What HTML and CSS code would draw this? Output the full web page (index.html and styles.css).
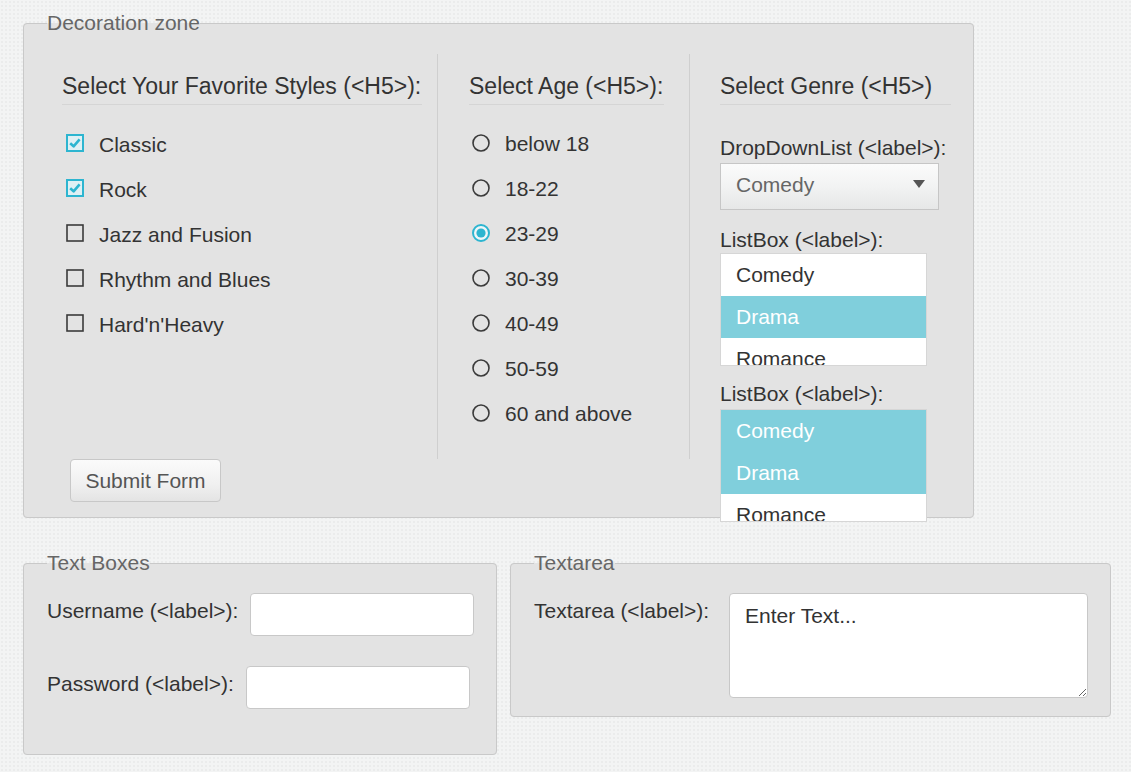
FILE: index.html
```html
<!DOCTYPE html>
<html>
<head>
<meta charset="utf-8">
<link rel="stylesheet" href="styles.css">
</head>
<body>
<div class="page">
  <fieldset class="zone">
    <legend>Decoration zone</legend>
    <div class="cols">
      <div class="col col-styles">
        <h5 class="col-title">Select Your Favorite Styles (&lt;H5&gt;):</h5>
        <ul class="opts">
          <li class="opt"><svg class="mark" width="18" height="18" viewBox="0 0 18 18"><rect x="1" y="1" width="16" height="16" fill="#dff0f4" stroke="#2db5d0" stroke-width="2"/><path d="M4.2 9.2 L7.6 12.3 L13.6 5.4" fill="none" stroke="#2db5d0" stroke-width="2.6" stroke-linejoin="round"/></svg><span>Classic</span></li>
          <li class="opt"><svg class="mark" width="18" height="18" viewBox="0 0 18 18"><rect x="1" y="1" width="16" height="16" fill="#dff0f4" stroke="#2db5d0" stroke-width="2"/><path d="M4.2 9.2 L7.6 12.3 L13.6 5.4" fill="none" stroke="#2db5d0" stroke-width="2.6" stroke-linejoin="round"/></svg><span>Rock</span></li>
          <li class="opt"><svg class="mark" width="18" height="18" viewBox="0 0 18 18"><rect x="1" y="1" width="16" height="16" fill="none" stroke="#3a3a3a" stroke-width="1.6"/></svg><span>Jazz and Fusion</span></li>
          <li class="opt"><svg class="mark" width="18" height="18" viewBox="0 0 18 18"><rect x="1" y="1" width="16" height="16" fill="none" stroke="#3a3a3a" stroke-width="1.6"/></svg><span>Rhythm and Blues</span></li>
          <li class="opt"><svg class="mark" width="18" height="18" viewBox="0 0 18 18"><rect x="1" y="1" width="16" height="16" fill="none" stroke="#3a3a3a" stroke-width="1.6"/></svg><span>Hard'n'Heavy</span></li>
        </ul>
      </div>
      <div class="col col-age">
        <h5 class="col-title">Select Age (&lt;H5&gt;):</h5>
        <ul class="opts">
          <li class="opt"><svg class="mark" width="18" height="18" viewBox="0 0 18 18"><circle cx="9" cy="9" r="8" fill="none" stroke="#3a3a3a" stroke-width="1.6"/></svg><span>below 18</span></li>
          <li class="opt"><svg class="mark" width="18" height="18" viewBox="0 0 18 18"><circle cx="9" cy="9" r="8" fill="none" stroke="#3a3a3a" stroke-width="1.6"/></svg><span>18-22</span></li>
          <li class="opt"><svg class="mark" width="18" height="18" viewBox="0 0 18 18"><circle cx="9" cy="9" r="8" fill="#eef6f8" stroke="#2db5d0" stroke-width="2"/><circle cx="9" cy="9" r="4.6" fill="#2db5d0"/></svg><span>23-29</span></li>
          <li class="opt"><svg class="mark" width="18" height="18" viewBox="0 0 18 18"><circle cx="9" cy="9" r="8" fill="none" stroke="#3a3a3a" stroke-width="1.6"/></svg><span>30-39</span></li>
          <li class="opt"><svg class="mark" width="18" height="18" viewBox="0 0 18 18"><circle cx="9" cy="9" r="8" fill="none" stroke="#3a3a3a" stroke-width="1.6"/></svg><span>40-49</span></li>
          <li class="opt"><svg class="mark" width="18" height="18" viewBox="0 0 18 18"><circle cx="9" cy="9" r="8" fill="none" stroke="#3a3a3a" stroke-width="1.6"/></svg><span>50-59</span></li>
          <li class="opt"><svg class="mark" width="18" height="18" viewBox="0 0 18 18"><circle cx="9" cy="9" r="8" fill="none" stroke="#3a3a3a" stroke-width="1.6"/></svg><span>60 and above</span></li>
        </ul>
      </div>
      <div class="col col-genre">
        <h5 class="col-title">Select Genre (&lt;H5&gt;)</h5>
        <label class="field-label first">DropDownList (&lt;label&gt;):</label>
        <div class="dropdown"><span>Comedy</span><svg class="caret" width="12" height="8" viewBox="0 0 12 8"><path d="M0 0 H12 L6 8 Z" fill="#555"/></svg></div>
        <label class="field-label">ListBox (&lt;label&gt;):</label>
        <ul class="listbox">
          <li>Comedy</li>
          <li class="sel">Drama</li>
          <li>Romance</li>
        </ul>
        <label class="field-label second">ListBox (&lt;label&gt;):</label>
        <ul class="listbox">
          <li class="sel">Comedy</li>
          <li class="sel">Drama</li>
          <li>Romance</li>
        </ul>
      </div>
    </div>
    <button class="submit" type="button">Submit Form</button>
  </fieldset>

  <div class="bottom">
    <fieldset class="box textboxes">
      <legend>Text Boxes</legend>
      <div class="row"><label class="row-label">Username (&lt;label&gt;):</label><input class="text-input" type="text"></div>
      <div class="row"><label class="row-label">Password (&lt;label&gt;):</label><input class="text-input" type="password"></div>
    </fieldset>
    <fieldset class="box textareabox">
      <legend>Textarea</legend>
      <div class="row"><label class="row-label ta-label">Textarea (&lt;label&gt;):</label><textarea class="ta">Enter Text...</textarea></div>
    </fieldset>
  </div>
</div>
</body>
</html>
```
FILE: styles.css
```css
* { box-sizing: border-box; }
html, body {
  margin: 0;
  padding: 0;
}
body {
  background-color: #f3f4f4;
  background-image: radial-gradient(#ebecec 0.8px, transparent 1px);
  background-size: 4px 4px;
  font-family: "Liberation Sans", Arial, sans-serif;
  color: #333;
  font-size: 21px;
  width: 1131px;
  height: 772px;
  overflow: hidden;
}
.page {
  padding: 11px 0 0 23px;
}
fieldset {
  margin: 0;
  padding: 0;
  border: 1px solid #c9c9c9;
  border-radius: 4px;
  background: #e3e3e3;
  min-width: 0;
}
legend {
  margin-left: 23px;
  padding: 0;
  font-size: 21px;
  line-height: 24px;
  color: #666;
}
.box legend { margin-left: 0; }
.zone {
  width: 951px;
  padding: 19px 0 15px 0;
}
.cols {
  display: flex;
  height: 405px;
}
.col {
  padding-top: 19px;
}
.col-styles {
  width: 414px;
  padding-left: 38px;
  padding-right: 15px;
  border-right: 1px solid #cfcfcf;
}
.col-age {
  width: 252px;
  padding-left: 31px;
  padding-right: 25px;
  border-right: 1px solid #cfcfcf;
}
.col-genre {
  width: 283px;
  padding-left: 30px;
  padding-right: 22px;
}
.col-title {
  margin: 0;
  font-size: 23px;
  font-weight: normal;
  line-height: 26px;
  padding-bottom: 5px;
  border-bottom: 1px solid #d5d5d5;
  color: #333;
  white-space: nowrap;
}
.opts {
  list-style: none;
  margin: 17px 0 0 0;
  padding: 0 0 0 4px;
}
.opt {
  display: flex;
  align-items: center;
  height: 45px;
  gap: 15px;
  line-height: 24px;
}
.mark { flex: none; margin-top: -3px; }
.col-age .opts { margin-top: 16px; padding-left: 3px; }
.col-age .mark { margin-top: -2px; }

.field-label {
  display: block;
  line-height: 24px;
  white-space: nowrap;
}
.field-label.first { margin-top: 31px; margin-bottom: 3px; }
.field-label { margin-top: 18px; margin-bottom: 1px; }
.field-label.second { margin-top: 16px; margin-bottom: 3px; }
.dropdown {
  width: 219px;
  height: 47px;
  border: 1px solid #c6c6c6;
  background: linear-gradient(#fbfbfb, #f2f3f3 50%, #e6e7e7);
  display: flex;
  align-items: center;
  justify-content: space-between;
  padding: 0 13px 3px 15px;
  color: #666;
}
.caret { margin-top: -2px; }
.listbox {
  list-style: none;
  margin: 0;
  padding: 0;
  width: 207px;
  height: 113px;
  overflow: hidden;
  background: #fff;
  border: 1px solid #d6d6d6;
  position: relative;
  z-index: 1;
}
.listbox li {
  height: 42px;
  line-height: 42px;
  padding-left: 15px;
  color: #333;
}
.listbox li.sel {
  background: #80cfdc;
  color: #fff;
}
.submit {
  display: block;
  margin: 0 0 0 46px;
  width: 151px;
  height: 43px;
  border: 1px solid #c8c8c8;
  border-radius: 4px;
  background: linear-gradient(#fbfbfb, #f0f0f0 60%, #e4e4e4);
  font-family: "Liberation Sans", Arial, sans-serif;
  font-size: 21px;
  color: #555;
  padding: 0;
}

.bottom {
  display: flex;
  align-items: flex-start;
  gap: 13px;
  margin-top: 33px;
}
.textboxes {
  width: 474px;
  padding: 18px 23px 45px 23px;
}
.textareabox {
  width: 601px;
  padding: 18px 22px 18px 23px;
}
.row {
  display: flex;
  align-items: flex-start;
}
.row + .row { margin-top: 30px; }
.row-label {
  padding-top: 6px;
  line-height: 24px;
  white-space: nowrap;
  color: #333;
}
.text-input {
  margin-left: 12px;
  width: 224px;
  height: 43px;
  border: 1px solid #c8c8c8;
  border-radius: 4px;
  background: #fff;
  font-family: "Liberation Sans", Arial, sans-serif;
  font-size: 21px;
  padding: 0 10px;
  outline: none;
}
.ta-label { width: 195px; flex: none; }
.ta {
  width: 359px;
  height: 105px;
  border: 1px solid #c8c8c8;
  border-radius: 4px;
  background: #fff;
  font-family: "Liberation Sans", Arial, sans-serif;
  font-size: 21px;
  line-height: 24px;
  color: #333;
  padding: 10px 15px;
  margin: 0;
  outline: none;
  display: block;
}
```
